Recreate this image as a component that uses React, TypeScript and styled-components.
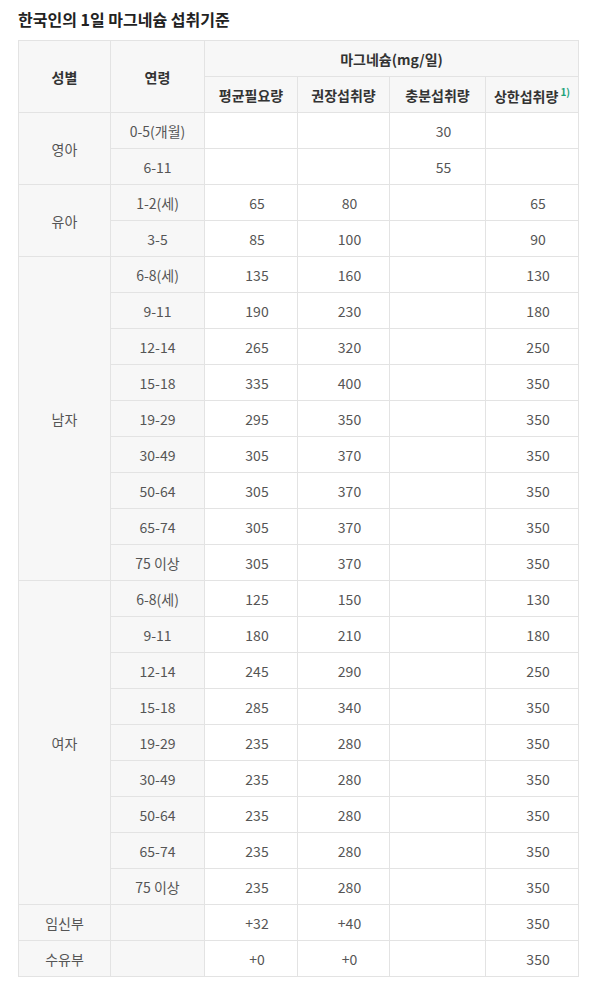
import React from "react";
import styled, { createGlobalStyle } from "styled-components";

const Global = createGlobalStyle`
  html, body { margin: 0; padding: 0; background: #fff; }
  body { font-family: "Noto Sans CJK KR", "Noto Sans", sans-serif; color: #333; }
`;

const Page = styled.div`
  padding: 9px 22px 0 18px;
  width: 560px;
`;

const Title = styled.h3`
  margin: 0 0 10px 0;
  font-size: 16px;
  font-weight: 700;
  line-height: 21px;
  color: #222;
`;

const Table = styled.table`
  border-collapse: collapse;
  width: 560px;
  table-layout: fixed;
  font-size: 14px;
`;

const Th = styled.th`
  border: 1px solid #e3e3e3;
  background: #f7f7f7;
  height: 35px;
  padding: 0;
  font-weight: 700;
  color: #333;
  text-align: center;
  vertical-align: middle;
`;

const Td = styled.td<{ $gray?: boolean; $num?: boolean }>`
  border: 1px solid #e3e3e3;
  background: ${(p) => (p.$gray ? "#f7f7f7" : "#fff")};
  height: 35px;
  padding: 0 0 0 ${(p) => (p.$num ? "12px" : "0")};
  color: #555;
  text-align: center;
  vertical-align: middle;
`;

const Sup = styled.sup`
  color: #1ba27a;
  font-size: 10px;
  font-weight: 700;
  margin-left: 2px;
`;

type Row = [string, string, string, string, string];

const groups: { name: string; rows: Row[] }[] = [
  {
    name: "영아",
    rows: [
      ["0-5(개월)", "", "", "30", ""],
      ["6-11", "", "", "55", ""],
    ],
  },
  {
    name: "유아",
    rows: [
      ["1-2(세)", "65", "80", "", "65"],
      ["3-5", "85", "100", "", "90"],
    ],
  },
  {
    name: "남자",
    rows: [
      ["6-8(세)", "135", "160", "", "130"],
      ["9-11", "190", "230", "", "180"],
      ["12-14", "265", "320", "", "250"],
      ["15-18", "335", "400", "", "350"],
      ["19-29", "295", "350", "", "350"],
      ["30-49", "305", "370", "", "350"],
      ["50-64", "305", "370", "", "350"],
      ["65-74", "305", "370", "", "350"],
      ["75 이상", "305", "370", "", "350"],
    ],
  },
  {
    name: "여자",
    rows: [
      ["6-8(세)", "125", "150", "", "130"],
      ["9-11", "180", "210", "", "180"],
      ["12-14", "245", "290", "", "250"],
      ["15-18", "285", "340", "", "350"],
      ["19-29", "235", "280", "", "350"],
      ["30-49", "235", "280", "", "350"],
      ["50-64", "235", "280", "", "350"],
      ["65-74", "235", "280", "", "350"],
      ["75 이상", "235", "280", "", "350"],
    ],
  },
  { name: "임신부", rows: [["", "+32", "+40", "", "350"]] },
  { name: "수유부", rows: [["", "+0", "+0", "", "350"]] },
];

export default function App() {
  return (
    <>
      <Global />
      <Page>
        <Title>한국인의 1일 마그네슘 섭취기준</Title>
        <Table>
          <colgroup>
            <col style={{ width: 92 }} />
            <col style={{ width: 94 }} />
            <col style={{ width: 93 }} />
            <col style={{ width: 92 }} />
            <col style={{ width: 96 }} />
            <col style={{ width: 93 }} />
          </colgroup>
          <thead>
            <tr>
              <Th rowSpan={2}>성별</Th>
              <Th rowSpan={2}>연령</Th>
              <Th colSpan={4}>마그네슘(mg/일)</Th>
            </tr>
            <tr>
              <Th>평균필요량</Th>
              <Th>권장섭취량</Th>
              <Th>충분섭취량</Th>
              <Th>
                상한섭취량<Sup>1)</Sup>
              </Th>
            </tr>
          </thead>
          <tbody>
            {groups.map((g) =>
              g.rows.map((r, i) => (
                <tr key={g.name + i}>
                  {i === 0 && (
                    <Td $gray rowSpan={g.rows.length}>
                      {g.name}
                    </Td>
                  )}
                  <Td $gray>{r[0]}</Td>
                  <Td $num>{r[1]}</Td>
                  <Td $num>{r[2]}</Td>
                  <Td $num>{r[3]}</Td>
                  <Td $num>{r[4]}</Td>
                </tr>
              ))
            )}
          </tbody>
        </Table>
      </Page>
    </>
  );
}
